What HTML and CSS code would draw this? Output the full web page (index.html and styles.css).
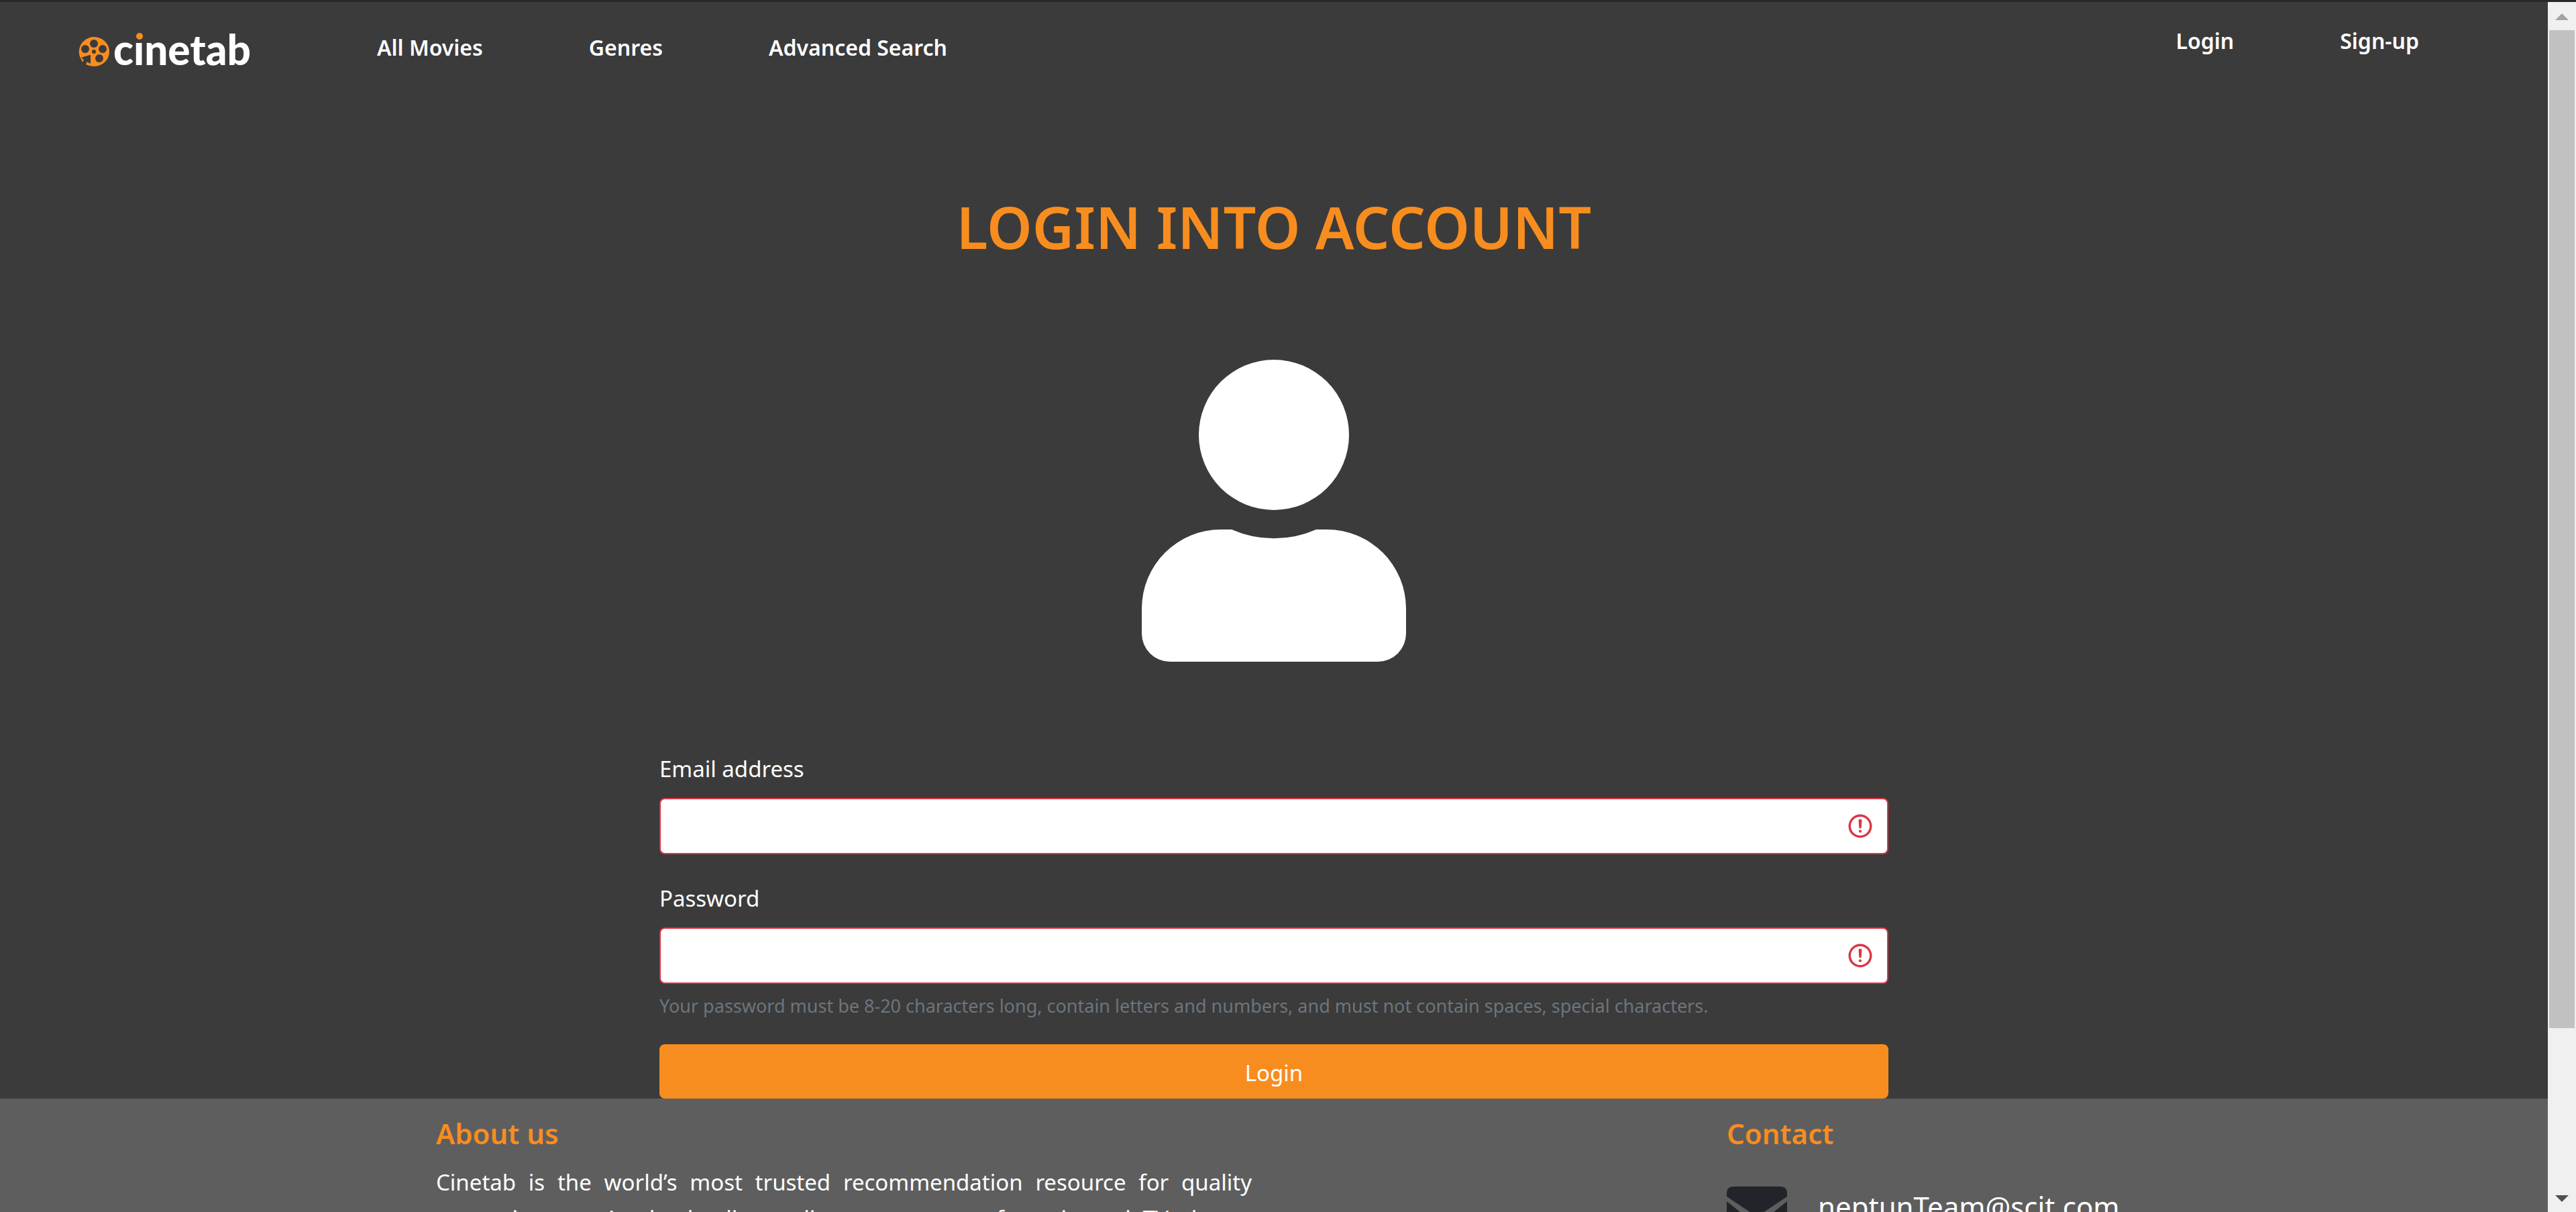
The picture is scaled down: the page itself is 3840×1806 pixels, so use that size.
FILE: index.html
```html
<!DOCTYPE html>
<html lang="en">
<head>
<meta charset="utf-8">
<title>Cinetab - Login</title>
<link rel="stylesheet" href="styles.css">
</head>
<body>
<div class="window">
  <div class="page">
    <header class="topbar">
      <a class="logo" href="#" aria-label="cinetab">
        <svg class="reel" viewBox="0 0 48 44" aria-hidden="true">
          <path fill="#f88d1f" fill-rule="evenodd" d="M24 0a23 22 0 0 1 0 44a23 22 0 0 1-11-3l5-3V27L5 31l3 1l-1 4A23 22 0 0 1 24 0z"/>
          <g fill="#3b3b3b">
            <circle cx="24" cy="10" r="6"/>
            <circle cx="11" cy="18" r="6"/>
            <circle cx="37" cy="18" r="6"/>
            <circle cx="32" cy="32" r="6"/>
            <circle cx="24" cy="22" r="3"/>
            <path d="M5 31l14-4v13l-3-2-5 4-6-6 3-4z"/>
          </g>
          <path fill="#f88d1f" d="M5 33l4 1-2 4zM12 41l2-4 4 3v3z"/>
        </svg>
        <span class="wordmark">c<span class="i">ı</span>netab</span>
      </a>
      <nav class="links">
        <a href="#">All Movies</a>
        <a href="#">Genres</a>
        <a href="#">Advanced Search</a>
      </nav>
      <nav class="links account">
        <a href="#">Login</a>
        <a href="#">Sign-up</a>
      </nav>
    </header>

    <main class="login">
      <h1>LOGIN INTO ACCOUNT</h1>
      <svg class="avatar" viewBox="0 0 394 450" aria-hidden="true">
        <circle cx="197" cy="112" r="112" fill="#fff"/>
        <path fill="#fff" d="M118 253h16a156 156 0 0 0 126 0h16a118 118 0 0 1 118 118v37a42 42 0 0 1-42 42H42a42 42 0 0 1-42-42v-37a118 118 0 0 1 118-118z"/>
      </svg>
      <form class="form">
        <label for="email">Email address</label>
        <div class="field">
          <input id="email" type="email">
          <svg viewBox="0 0 12 12" fill="none" stroke="#dc3545" aria-hidden="true"><circle cx="6" cy="6" r="4.5"/><path stroke-linejoin="round" d="M5.8 3.6h.4L6 6.5z"/><circle cx="6" cy="8.2" r=".6" fill="#dc3545" stroke="none"/></svg>
        </div>
        <label for="password">Password</label>
        <div class="field">
          <input id="password" type="password" aria-describedby="hint">
          <svg viewBox="0 0 12 12" fill="none" stroke="#dc3545" aria-hidden="true"><circle cx="6" cy="6" r="4.5"/><path stroke-linejoin="round" d="M5.8 3.6h.4L6 6.5z"/><circle cx="6" cy="8.2" r=".6" fill="#dc3545" stroke="none"/></svg>
        </div>
        <p class="hint" id="hint">Your password must be 8-20 characters long, contain letters and numbers, and must not contain spaces, special characters.</p>
        <button type="submit">Login</button>
      </form>
    </main>

    <footer class="footer">
      <section class="about">
        <h2>About us</h2>
        <p>Cinetab is the world’s most trusted recommendation resource for quality entertainment. As the leading online aggregator of movie and TV shows,</p>
      </section>
      <section class="contact">
        <h2>Contact</h2>
        <a class="mail" href="mailto:neptunTeam@scit.com">
          <svg viewBox="0 0 90 68" aria-hidden="true"><g fill="#212529"><path d="M0 15V10Q0 0 10 0H80Q90 0 90 10V15L45 45z"/><path d="M0 22L26 43L0 60zM90 22L64 43L90 60zM0 68L32 47L45 54L58 47L90 68z"/></g></svg>
          <span>neptunTeam@scit.com</span>
        </a>
      </section>
    </footer>
  </div>
  <div class="scrollbar" aria-hidden="true">
    <svg viewBox="0 0 20 10"><path fill="#a3a3a3" d="M0 10L10 0L20 10z"/></svg>
    <div class="track"><div class="thumb"></div></div>
    <svg viewBox="0 0 20 10"><path fill="#505050" d="M0 0H20L10 10z"/></svg>
  </div>
</div>
</body>
</html>
```

FILE: styles.css
```css
* { box-sizing: border-box; }
body {
  margin: 0;
  background: #3b3b3b;
  color: #fff;
  font-family: "Noto Sans", "Open Sans", sans-serif;
  font-size: 33px;
  line-height: 54px;
}
a { color: inherit; text-decoration: none; }
h1, h2, p { margin: 0; }

.window {
  display: flex;
  height: 100vh;
  overflow: hidden;
  border-top: 3px solid #282828;
}
.page { flex: 1; min-width: 0; }

.topbar {
  display: flex;
  align-items: flex-start;
  height: 160px;
  padding: 34px 192px 0 116px;
}
.logo { display: flex; align-items: center; width: 446px; }
.reel { width: 48px; height: 44px; margin-top: 8px; }
.wordmark {
  margin-left: 5px;
  font: 900 62px/72px Lato, sans-serif;
}
.wordmark .i { position: relative; }
.wordmark .i::before {
  content: "";
  position: absolute;
  top: 13px;
  left: 4px;
  width: 10px;
  height: 10px;
  border-radius: 50%;
  background: #f88d1f;
}
.links {
  display: flex;
  gap: 158px;
  padding-top: 10px;
  font-size: 32px;
  font-weight: 600;
  line-height: 48px;
}
.account { margin-left: auto; padding-top: 0; }

.login { width: 1832px; max-width: 100%; margin: 0 auto; }
h1 {
  padding-top: 115px;
  color: #f88d1f;
  font-size: 86px;
  font-weight: 600;
  line-height: 120px;
  text-align: center;
}
.avatar { display: block; width: 394px; height: 450px; margin: 138px auto 0; }
.form { padding-top: 133px; }
.form label { display: block; margin-bottom: 16px; }
.field { position: relative; margin-bottom: 39px; }
.field input {
  display: block;
  width: 100%;
  height: 84px;
  padding: 12px 80px 12px 24px;
  border: 2px solid #dc3545;
  border-radius: 8px;
  background: #fff;
  font: inherit;
}
.field svg { position: absolute; top: 21px; right: 21px; width: 42px; height: 42px; }
.hint { margin-top: -28px; color: #6c757d; font-size: 27px; line-height: 44px; }
.form button {
  display: block;
  width: 100%;
  height: 81px;
  margin-top: 35px;
  padding: 4px 0 0;
  border: 0;
  border-radius: 8px;
  background: #f88d1f;
  color: #fff;
  font: inherit;
}

.footer {
  display: flex;
  justify-content: space-between;
  padding: 22px 638px 48px 650px;
  background: #5e5e5e;
}
.footer h2 { color: #f88d1f; font-size: 42px; font-weight: 600; line-height: 60px; }
.about { width: 1216px; }
.about p { padding-top: 16px; text-align: justify; text-align-last: justify; }
.contact { width: 586px; }
.mail { display: flex; align-items: flex-start; gap: 46px; padding-top: 49px; font-size: 42px; line-height: 60px; }
.mail svg { flex: none; width: 90px; height: 68px; }

.scrollbar {
  display: flex;
  flex-direction: column;
  align-items: center;
  width: 42px;
  padding: 17px 0 15px;
  background: #f0f0f0;
}
.scrollbar svg { width: 20px; height: 10px; }
.track { flex: 1; padding: 15px 0; }
.thumb { width: 38px; height: 86.4%; background: #c1c1c1; }
```
